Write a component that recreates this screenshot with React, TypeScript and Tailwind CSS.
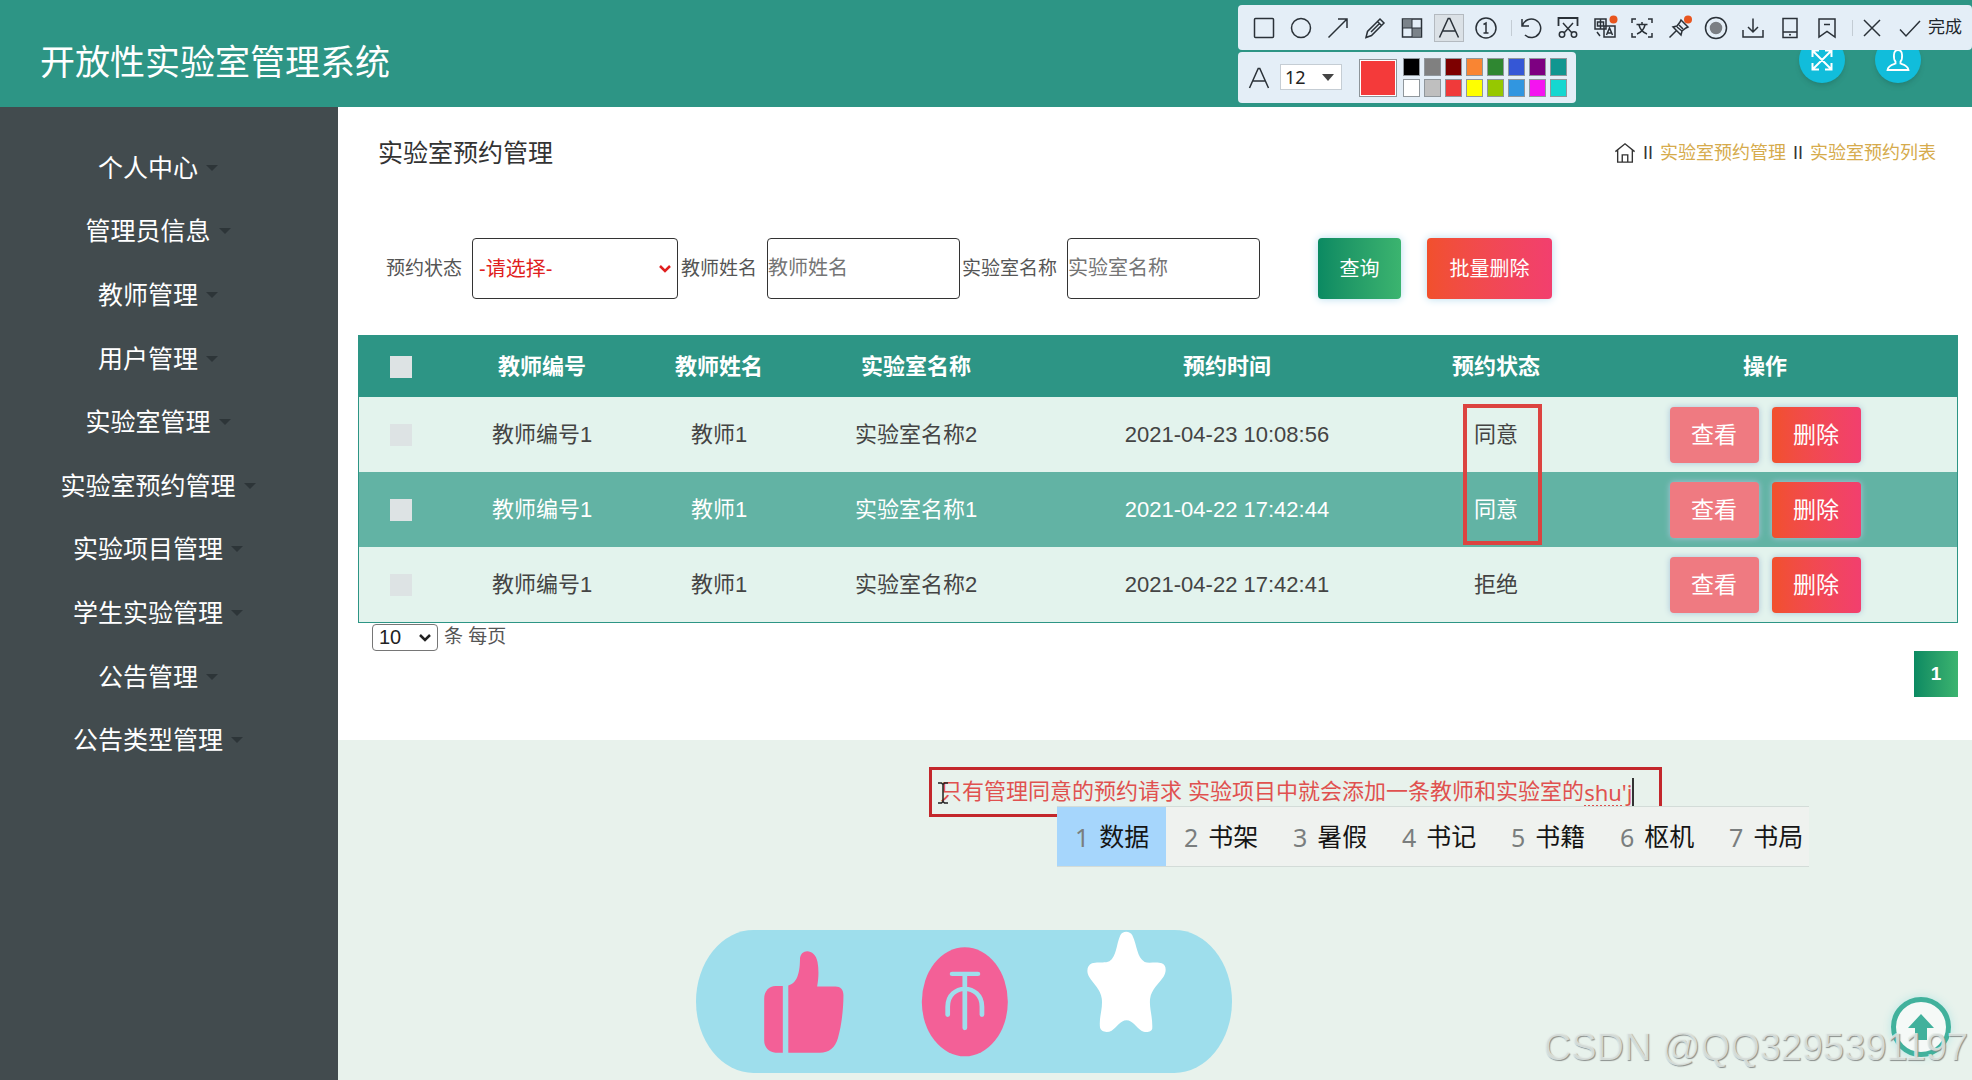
import { useState } from "react"
import type { ReactNode } from "react"

const menu = [
  "个人中心",
  "管理员信息",
  "教师管理",
  "用户管理",
  "实验室管理",
  "实验室预约管理",
  "实验项目管理",
  "学生实验管理",
  "公告管理",
  "公告类型管理",
]

const rows = [
  { id: 1, code: "教师编号1", teacher: "教师1", lab: "实验室名称2", time: "2021-04-23 10:08:56", status: "同意" },
  { id: 2, code: "教师编号1", teacher: "教师1", lab: "实验室名称1", time: "2021-04-22 17:42:44", status: "同意" },
  { id: 3, code: "教师编号1", teacher: "教师1", lab: "实验室名称2", time: "2021-04-22 17:42:41", status: "拒绝" },
]

const swatches = [
  "bg-[#000000]",
  "bg-[#808080]",
  "bg-[#7d0000]",
  "bg-[#f98533]",
  "bg-[#2f8731]",
  "bg-[#3557d6]",
  "bg-[#7d0081]",
  "bg-[#109690]",
  "bg-[#ffffff]",
  "bg-[#bfbfbf]",
  "bg-[#f03a3a]",
  "bg-[#ffff00]",
  "bg-[#96c800]",
  "bg-[#3196e0]",
  "bg-[#f414f0]",
  "bg-[#16d7d0]",
]

const candidates = ["数据", "书架", "暑假", "书记", "书籍", "枢机", "书局"]

function ToolIcon({ label, active, children }: { label: string; active?: boolean; children: ReactNode }) {
  return (
    <button aria-label={label} className="flex w-[37px] shrink-0 justify-center">
      <span
        className={`flex h-7 w-[30px] items-center justify-center ${
          active ? "border border-[#b4bac0] bg-[#dbe1e6]" : ""
        }`}
      >
        <svg
          viewBox="0 0 24 24"
          className="h-6 w-6 shrink-0 overflow-visible"
          fill="none"
          stroke="#2a3138"
          strokeWidth="1.5"
        >
          {children}
        </svg>
      </span>
    </button>
  )
}

function SelectArrow({ className }: { className: string }) {
  return (
    <svg
      viewBox="0 0 14 10"
      className={`pointer-events-none absolute h-2.5 w-3.5 ${className}`}
      fill="none"
      stroke="currentColor"
      strokeWidth="2.5"
    >
      <path d="M2 2l5 5 5-5" />
    </svg>
  )
}

function CaptureToolbar() {
  return (
    <div className="absolute top-[5px] right-0 z-20 flex w-[734px] flex-col items-start gap-0.5">
      <div className="flex h-[45px] w-full items-center rounded-sm bg-[#e4eef7] pl-[7px]">
        <ToolIcon label="矩形">
          <rect x="2.5" y="2.5" width="19" height="19" rx="1" />
        </ToolIcon>
        <ToolIcon label="椭圆">
          <circle cx="12" cy="12" r="9.5" />
        </ToolIcon>
        <ToolIcon label="箭头">
          <path d="M2.5 21.5 21 3M12 3h9v9" />
        </ToolIcon>
        <ToolIcon label="画笔">
          <path d="M3 21.5l1.5-6L17 3l4 4L8.500 19.500zM14.500 5.500l4 4M8 16l8-8" />
        </ToolIcon>
        <ToolIcon label="马赛克">
          <rect x="2.500" y="3" width="19" height="18" />
          <path d="M3 3.500h9v8.500H3zM12 12h9v8.500h-9z" fill="#7b838a" stroke="none" />
          <path d="M12 3v18M2.500 12h19" strokeWidth="1" />
        </ToolIcon>
        <ToolIcon label="文字" active>
          <path d="M2.500 21.500 11.200 2.500h1.600L21.500 21.500M5.500 15h13" />
        </ToolIcon>
        <ToolIcon label="序号">
          <circle cx="12" cy="12" r="10" />
          <path d="M9.500 8.500 12 7v10M9.500 17h5" />
        </ToolIcon>
        <span className="h-4 w-2 border-r border-[#c3ccd4]" />
        <ToolIcon label="撤销">
          <path d="M3 3v7h7M3.500 9.500A9.300 9.300 0 1 1 6 19" />
        </ToolIcon>
        <ToolIcon label="长截图">
          <path d="M2.500 10V2h19v8" strokeWidth="1.800" />
          <path d="M7 7l9 10M17 7 8 17" />
          <circle cx="6" cy="18.500" r="2.700" />
          <circle cx="18" cy="18.500" r="2.700" />
        </ToolIcon>
        <ToolIcon label="翻译">
          <path d="M2 3h11v10H2zM7.500 3v10M4.500 6h6v4h-6zM11 10h11v11H11z" />
          <path d="M13.500 19l3-7 3 7M14.500 17h4M4 16l3 4" />
          <circle cx="20.500" cy="3.500" r="4" fill="#e8551f" stroke="none" />
        </ToolIcon>
        <ToolIcon label="文字识别">
          <path d="M2 7V3h4M18 3h4v4M22 17v4h-4M6 21H2v-4" />
          <path d="M6.500 8.500h11M12 6v2.500M9 9c1 4 4 7.500 8 9M15 9c-1 4-4 7.500-8 9" />
        </ToolIcon>
        <ToolIcon label="钉住">
          <path d="M14 4l7 7-2 1-4 3-1 4-8-8 4-1 3-4zM9 15l-6.500 6.500" />
          <path d="M10 11l5 4M12 9l4 4" />
          <circle cx="21" cy="3.500" r="4" fill="#e8551f" stroke="none" />
        </ToolIcon>
        <ToolIcon label="录屏">
          <circle cx="12" cy="12" r="10.500" />
          <circle cx="12" cy="12" r="5.500" fill="#7b7f84" stroke="#7b7f84" />
        </ToolIcon>
        <ToolIcon label="保存">
          <path d="M12 2.500v13M7 11l5 5 5-5M2 14v7h20v-7" />
        </ToolIcon>
        <ToolIcon label="发送到手机">
          <path d="M5 2.500h14v19H5zM5 16h14" />
          <circle cx="12" cy="18.800" r="1" fill="#2a3138" stroke="none" />
        </ToolIcon>
        <ToolIcon label="收藏">
          <path d="M4 3h16v18l-8-5.500L4 21zM9 8.500h6" />
        </ToolIcon>
        <span className="h-4 w-2 border-r border-[#c3ccd4]" />
        <ToolIcon label="关闭">
          <path d="M4 4l16 16M20 4 4 20" />
        </ToolIcon>
        <button className="flex items-center gap-1.5 pl-2">
          <svg viewBox="0 0 24 24" className="h-6 w-6" fill="none" stroke="#2a3138" strokeWidth="1.5">
            <path d="M2 13.500l6 6.500L22 5" />
          </svg>
          <span className="text-[17px] leading-6 text-[#20262c]">完成</span>
        </button>
      </div>
      <div className="flex h-[51px] items-center rounded-sm bg-[#e4eef7] px-[9px]">
        <svg viewBox="0 0 24 24" className="h-6 w-6" fill="none" stroke="#2a3138" strokeWidth="1.500">
          <path d="M2.500 22 11.200 2.500h1.600L21.500 22M5.500 15h13" />
        </svg>
        <div className="relative ml-[9px]">
          <select
            aria-label="字号"
            defaultValue="12"
            className="h-[26px] w-[62px] appearance-none border border-[#c5cdd4] bg-white pl-1 font-['Noto_Sans'] text-lg leading-6 text-[#222]"
          >
            <option>12</option>
            <option>14</option>
          </select>
          <span className="pointer-events-none absolute top-[10px] right-2 border-x-6 border-t-7 border-x-transparent border-t-[#444]" />
        </div>
        <span className="ml-[17px] h-[38px] w-[38px] border border-[#8d9499] bg-[#f43a3a] ring-1 ring-white ring-inset" />
        <div className="ml-1.5 grid grid-cols-8 gap-x-1 gap-y-[3px]">
          {swatches.map((color) => (
            <button key={color} aria-label="颜色" className={`h-[18px] w-[17px] border border-[#90979c] ${color}`} />
          ))}
        </div>
      </div>
    </div>
  )
}

function Header() {
  return (
    <header className="flex h-[107px] items-center justify-between bg-[#2d9585] pr-[51px] pl-10">
      <h1 className="mt-[18px] text-[35px] leading-10 text-white">开放性实验室管理系统</h1>
      <div className="mt-3 flex gap-[30px]">
        <button
          aria-label="全屏"
          className="flex h-[46px] w-[46px] items-center justify-center rounded-full bg-[#11bddb] shadow-md"
        >
          <svg viewBox="0 0 24 24" className="h-6 w-6" fill="none" stroke="white" strokeWidth="2">
            <path d="M3 3l18 18M21 3 3 21M2.500 9V2.500H9M15 2.500h6.500V9M21.500 15v6.500H15M9 21.500H2.500V15" />
          </svg>
        </button>
        <button
          aria-label="用户"
          className="flex h-[46px] w-[46px] items-center justify-center rounded-full bg-[#11bddb] shadow-md"
        >
          <svg viewBox="0 0 24 24" className="h-6 w-6" fill="none" stroke="white" strokeWidth="1.800">
            <path d="M9.500 13.500C7.500 11.500 6.500 2 12 2s4.500 9.500 2.500 11.500v2c3 1 7.500 2 8 6.500h-21c.5-4.500 5-5.500 8-6.500z" />
          </svg>
        </button>
      </div>
    </header>
  )
}

function Sidebar() {
  return (
    <aside className="w-[338px] shrink-0 bg-[#424b4e] pt-[29px]">
      <nav className="flex h-[636px] flex-col pr-[22px]">
        {menu.map((item) => (
          <a key={item} href="#" className="flex flex-1 items-center justify-center text-[25px] leading-8 text-white">
            {item}
            <span className="ml-2 border-x-6 border-t-6 border-x-transparent border-t-[#2d3538]" />
          </a>
        ))}
      </nav>
    </aside>
  )
}

function SearchForm() {
  const field = "h-[61px] rounded border border-[#333] bg-white text-xl"
  return (
    <form className="mt-[66px] flex items-center pl-12 text-[19px] leading-7 text-[#555]">
      <label htmlFor="status">预约状态</label>
      <div className="relative mr-[3px] ml-2.5 text-[#e02020]">
        <select id="status" className={`${field} w-[206px] appearance-none pl-1.5`}>
          <option>-请选择-</option>
          <option>同意</option>
          <option>拒绝</option>
        </select>
        <SelectArrow className="top-[26px] right-1.5" />
      </div>
      <label htmlFor="teacher">教师姓名</label>
      <input
        id="teacher"
        placeholder="教师姓名"
        className={`${field} mr-0.5 ml-2.5 w-[193px] placeholder:text-[#757575]`}
      />
      <label htmlFor="lab">实验室名称</label>
      <input id="lab" placeholder="实验室名称" className={`${field} ml-2.5 w-[193px] placeholder:text-[#757575]`} />
      <button
        type="button"
        className="ml-[58px] h-[61px] w-[83px] rounded bg-linear-to-r from-[#0a8a62] to-[#3bb46f] text-xl text-white shadow-[0_0_8px_#b5dcee]"
      >
        查询
      </button>
      <button
        type="button"
        className="ml-[26px] h-[61px] w-[125px] rounded bg-linear-to-r from-[#f1502c] to-[#f23f6e] text-xl text-white shadow-[0_0_8px_#b5dcee]"
      >
        批量删除
      </button>
    </form>
  )
}

function BookingTable() {
  const [checked, setChecked] = useState<number[]>([])
  const toggle = (id: number) =>
    setChecked(checked.includes(id) ? checked.filter((c) => c !== id) : [...checked, id])
  const box = "block mx-auto h-[22px] w-[22px] appearance-none bg-[#dde3e4] checked:bg-[#2d9585]"

  return (
    <div className="relative mt-9 border border-[#2d9585]">
      <table className="w-full table-fixed border-collapse text-center text-[22px] leading-8">
        <colgroup>
          <col className="w-[84px]" />
          <col className="w-[198px]" />
          <col className="w-[156px]" />
          <col className="w-[238px]" />
          <col className="w-[384px]" />
          <col className="w-[154px]" />
          <col />
        </colgroup>
        <thead className="bg-[#2d9585] text-white">
          <tr className="h-[61px]">
            <th>
              <input
                type="checkbox"
                aria-label="全选"
                className={box}
                checked={checked.length === rows.length}
                onChange={(e) => setChecked(e.target.checked ? rows.map((r) => r.id) : [])}
              />
            </th>
            <th>教师编号</th>
            <th>教师姓名</th>
            <th>实验室名称</th>
            <th>预约时间</th>
            <th>预约状态</th>
            <th>操作</th>
          </tr>
        </thead>
        <tbody>
          {rows.map((row) => (
            <tr key={row.id} className="h-[75px] bg-[#e3f3ed] text-[#444] even:bg-[#62b3a4] even:text-white">
              <td>
                <input
                  type="checkbox"
                  aria-label={row.time}
                  className={box}
                  checked={checked.includes(row.id)}
                  onChange={() => toggle(row.id)}
                />
              </td>
              <td>{row.code}</td>
              <td>{row.teacher}</td>
              <td>{row.lab}</td>
              <td>{row.time}</td>
              <td>{row.status}</td>
              <td>
                <div className="flex justify-center gap-[13px] text-[23px] text-white">
                  <button className="h-14 w-[89px] rounded bg-[#ef7a81] shadow-[0_0_6px_#a9c4d8]">查看</button>
                  <button className="h-14 w-[89px] rounded bg-linear-to-r from-[#f1502c] to-[#f23f6e] shadow-[0_0_6px_#a9c4d8]">
                    删除
                  </button>
                </div>
              </td>
            </tr>
          ))}
        </tbody>
      </table>
      {/* marked status cells */}
      <div className="absolute top-[68px] left-[1104px] h-[141px] w-[79px] border-4 border-[#dc4340]" />
    </div>
  )
}

function NoteBox() {
  return (
    <>
      <div className="absolute top-[767px] left-[929px] flex h-[50px] w-[733px] items-center border-3 border-[#c3272b] pl-2 text-[22px] leading-8 whitespace-pre text-[#e0514f]">
        <span>只有管理同意的预约请求 实验项目中就会添加一条教师和实验室的</span>
        <span className="font-['Noto_Sans'] underline decoration-dotted underline-offset-4">shu'j</span>
        <span className="h-7 w-0.5 bg-[#333]" />
      </div>
      <svg
        viewBox="0 0 10 22"
        className="absolute top-[782px] left-[938px] h-[22px] w-2.5"
        fill="none"
        stroke="#222"
        strokeWidth="1.500"
      >
        <path d="M0 1h3.500L5 2.500 6.500 1H10M5 2v18M0 21h3.500L5 19.500 6.500 21H10" />
      </svg>
      <ol className="absolute top-[806px] left-[1057px] flex h-[61px] w-[752px] border-y border-[#d3dcd8] bg-[#eff2ef] text-[25px] leading-8 text-[#151515]">
        {candidates.map((word, i) => (
          <li
            key={word}
            className={`flex w-[109px] shrink-0 items-center gap-2.5 pl-[18px] whitespace-nowrap ${
              i === 0 ? "bg-[#a6d6fc]" : ""
            }`}
          >
            <span className="font-['Noto_Sans'] text-[#7a7e7e]">{i + 1}</span>
            {word}
          </li>
        ))}
      </ol>
    </>
  )
}

function ReactionBar() {
  return (
    <div className="absolute top-[930px] left-[696px] flex h-[143px] w-[536px] items-center gap-[74px] rounded-[58px/72px] bg-[#9edeec] pl-[66px]">
      <button aria-label="点赞">
        <svg viewBox="225 110 230 320" preserveAspectRatio="none" className="h-[107px] w-[84px]" fill="#f36097">
          <path d="M262 224h20v199h-20c-18 0-31-16-31-36V262c0-22 13-38 31-38z" />
          <path d="M297 423V222c28-6 32-50 32-78 0-34 42-34 48 8 4 24 3 50-1 73h50c14 0 22 10 22 26 0 40-5 90-15 128-8 30-24 44-50 44z" />
        </svg>
      </button>
      <button aria-label="投币">
        <svg viewBox="660 100 247 340" preserveAspectRatio="none" className="h-[113px] w-[90px]">
          <ellipse cx="783" cy="271" rx="118" ry="164" fill="#f36097" />
          <g fill="none" stroke="#9edeec" strokeWidth="13" strokeLinecap="round">
            <path d="M748 187h71M783 190v160M736 310v-24c0-72 94-72 94 0v24" />
          </g>
        </svg>
      </button>
      <button aria-label="收藏" className="self-start">
        <svg viewBox="1110 60 234 312" preserveAspectRatio="none" className="h-[104px] w-[85px]" fill="white">
          <path d="M1210 76c5-14 27-14 33 0 14 32 12 66 34 80 12 5 34-2 47 4 14 6 13 26 5 40-11 18-34 38-37 66-3 28 7 52 6 88 0 13-20 15-30 8-14-9-24-31-41-31s-27 22-41 31c-12 7-30 4-32-10-3-34 8-52 5-86-3-28-24-46-35-66-8-14-6-34 8-40 14-6 36 1 48-6 20-14 18-48 30-78z" />
        </svg>
      </button>
    </div>
  )
}

export default function App() {
  return (
    <div className="relative flex min-h-screen flex-col overflow-hidden bg-[#e8f2ec] font-['Liberation_Sans','Noto_Sans_CJK_SC',sans-serif]">
      <Header />
      <div className="flex flex-1">
        <Sidebar />
        <main className="min-w-0 flex-1">
          <section className="bg-white pt-[27px] pb-[43px]">
            <div className="flex h-[38px] items-center justify-between pr-9 pl-10">
              <h2 className="text-[25px] leading-8 text-[#333]">实验室预约管理</h2>
              <div className="flex items-center gap-[7px] text-lg leading-7 text-[#333]">
                <a href="#" aria-label="首页">
                  <svg viewBox="0 0 24 24" className="h-[22px] w-[22px]" fill="none" stroke="#333" strokeWidth="1.500">
                    <path d="M1.500 10.500 12 2l10.500 8.500M4 9v13h16V9M9 22v-8h6v8" />
                  </svg>
                </a>
                <span>II</span>
                <a href="#" className="text-[#d6ab4c]">
                  实验室预约管理
                </a>
                <span>II</span>
                <a href="#" className="text-[#d6ab4c]">
                  实验室预约列表
                </a>
              </div>
            </div>
            <SearchForm />
            <div className="mr-[14px] ml-5">
              <BookingTable />
              <div className="flex items-center gap-1.5 pl-[14px] text-[19px] leading-7 text-[#555]">
                <div className="relative text-[#222]">
                  <select
                    id="size"
                    defaultValue="10"
                    className="block h-[27px] w-[66px] appearance-none rounded-sm border border-[#767676] bg-white pl-1.5 text-xl leading-6"
                  >
                    <option>10</option>
                    <option>25</option>
                  </select>
                  <SelectArrow className="top-[9px] right-1.5" />
                </div>
                <label htmlFor="size">条 每页</label>
              </div>
              <div className="flex justify-end">
                <button className="h-[46px] w-11 bg-linear-to-r from-[#0a8a62] to-[#3bb46f] text-[19px] font-bold text-white">
                  1
                </button>
              </div>
            </div>
          </section>
        </main>
      </div>

      <CaptureToolbar />
      <NoteBox />
      <ReactionBar />

      <button
        aria-label="返回顶部"
        className="absolute right-[21px] bottom-[23px] flex h-[60px] w-[60px] items-center justify-center rounded-full border-5 border-[#41b19c] bg-[#f5f9f7] shadow-[0_0_10px_#b8e6e4]"
      >
        <svg viewBox="0 0 26 26" className="h-[26px] w-[26px]" fill="#41b19c">
          <path d="M13 0l13 14h-7v12H7V14H0z" />
        </svg>
      </button>
      <p className="pointer-events-none absolute right-1 bottom-[13px] text-[38px] leading-10 text-[#e8efeb]/80 [text-shadow:1px_1px_1px_#8a8f8d]">
        CSDN @QQ3295391197
      </p>
    </div>
  )
}
